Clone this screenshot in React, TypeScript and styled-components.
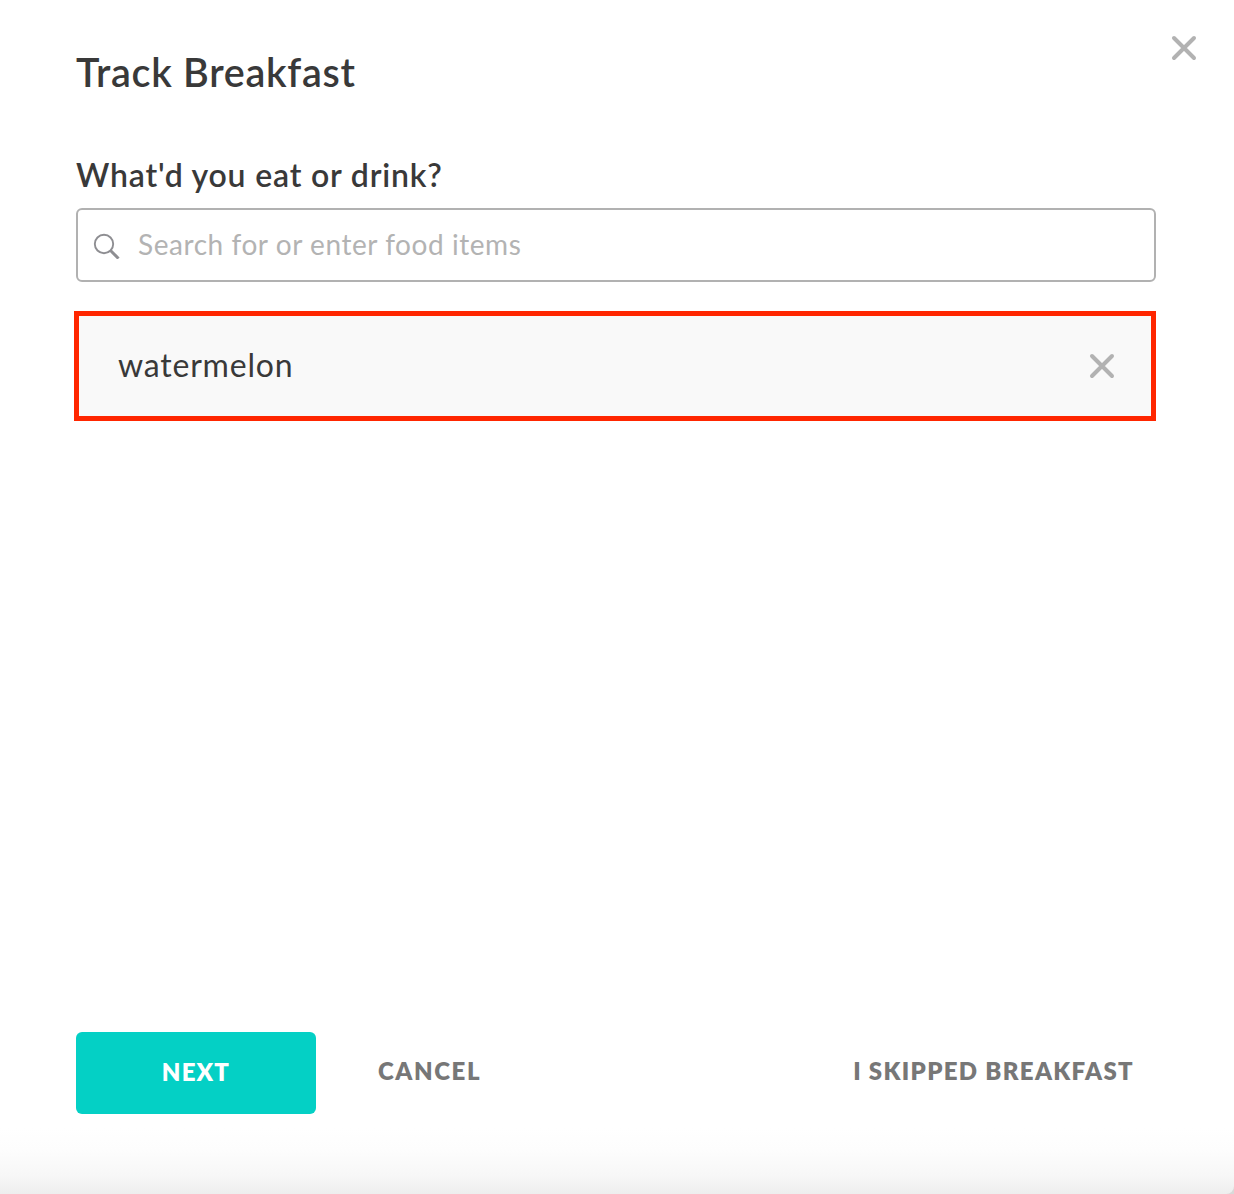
import React from 'react';
import styled, { createGlobalStyle } from 'styled-components';

const GlobalStyle = createGlobalStyle`
  * { box-sizing: border-box; }
  body { margin: 0; background: #d9d9d9; }
  button, input { font-family: inherit; border: 0; padding: 0; margin: 0; background: none; }
  button { cursor: pointer; }
`;

const Dialog = styled.main`
  display: flex;
  flex-direction: column;
  width: 1234px;
  height: 1194px;
  padding: 34px 36px 80px 76px;
  border-bottom-right-radius: 8px;
  background: linear-gradient(to bottom, #fff 0, #fff 1128px, #fdfdfd 1150px, #f7f7f7 1175px, #eee 1194px);
  font-family: 'Avenir Next', Lato, sans-serif;
  color: #393939;
`;

const Header = styled.header`
  display: flex;
  justify-content: space-between;
  align-items: flex-start;
  height: 119px;
`;

const Title = styled.h1`
  margin: 14px 0 0;
  font-size: 39.5px;
  line-height: 48px;
  font-weight: 600;
  letter-spacing: 0.7px;
`;

const IconButton = styled.button`
  display: flex;
  align-items: center;
  justify-content: center;
  width: 28px;
  height: 28px;
`;

const Content = styled.section`
  display: flex;
  flex-direction: column;
  width: 1080px;
`;

const Label = styled.label`
  height: 55px;
  font-size: 32px;
  line-height: 44px;
  font-weight: 600;
  letter-spacing: 0.82px;
`;

const SearchBox = styled.div`
  display: flex;
  align-items: center;
  gap: 18px;
  height: 74px;
  padding: 0 14px;
  border: 2px solid #b1b1b1;
  border-radius: 6px;
`;

const SearchInput = styled.input`
  flex: 1;
  height: 66px;
  padding-bottom: 2px;
  font-size: 28px;
  letter-spacing: 0.56px;
  color: #393939;
  outline: none;
  &::placeholder { color: #b3b3b3; opacity: 1; }
`;

const FoodItem = styled.div`
  display: flex;
  align-items: center;
  justify-content: space-between;
  width: 1082px;
  height: 110px;
  margin: 29px 0 0 -2px;
  padding: 0 35px 0 39px;
  border: 5px solid #ff2600;
  background: #f9f9f9;
`;

const FoodName = styled.span`
  padding-bottom: 3px;
  font-size: 32px;
  line-height: 40px;
  letter-spacing: 0.8px;
`;

const Footer = styled.footer`
  display: flex;
  align-items: center;
  width: 1080px;
  height: 82px;
  margin-top: auto;
`;

const Button = styled.button<{ $primary?: boolean; $end?: boolean }>`
  height: 82px;
  padding-bottom: ${p => (p.$primary ? 4 : 6)}px;
  width: ${p => (p.$primary ? '240px' : 'auto')};
  margin-left: ${p => (p.$primary ? '0' : p.$end ? 'auto' : '62px')};
  margin-right: ${p => (p.$end ? '22px' : '0')};
  border-radius: 6px;
  background: ${p => (p.$primary ? '#04d0c5' : 'transparent')};
  color: ${p => (p.$primary ? '#fff' : '#777')};
  font-size: 24px;
  font-weight: 800;
  letter-spacing: ${p => (p.$primary ? 1.2 : p.$end ? 1.33 : 1.6)}px;
`;

const CrossIcon = () => (
  <svg width="28" height="28" viewBox="0 0 28 28" fill="none" stroke="#b2b2b2" strokeWidth="4" strokeLinecap="round">
    <path d="M4 4 24 24M24 4 4 24" />
  </svg>
);

const SearchIcon = () => (
  <svg width="28" height="28" viewBox="0 0 28 28" fill="none" stroke="#8e8e92">
    <circle cx="12" cy="13" r="9.2" strokeWidth="1.9" />
    <path d="m18.5 19.5 8 8" strokeWidth="3" />
  </svg>
);

export default function App() {
  return (
    <>
      <GlobalStyle />
      <Dialog>
        <Header>
          <Title>Track Breakfast</Title>
          <IconButton aria-label="Close"><CrossIcon /></IconButton>
        </Header>
        <Content>
          <Label htmlFor="food">What'd you eat or drink?</Label>
          <SearchBox>
            <SearchIcon />
            <SearchInput id="food" placeholder="Search for or enter food items" />
          </SearchBox>
          <FoodItem>
            <FoodName>watermelon</FoodName>
            <IconButton aria-label="Remove"><CrossIcon /></IconButton>
          </FoodItem>
        </Content>
        <Footer>
          <Button $primary>NEXT</Button>
          <Button>CANCEL</Button>
          <Button $end>I SKIPPED BREAKFAST</Button>
        </Footer>
      </Dialog>
    </>
  );
}
